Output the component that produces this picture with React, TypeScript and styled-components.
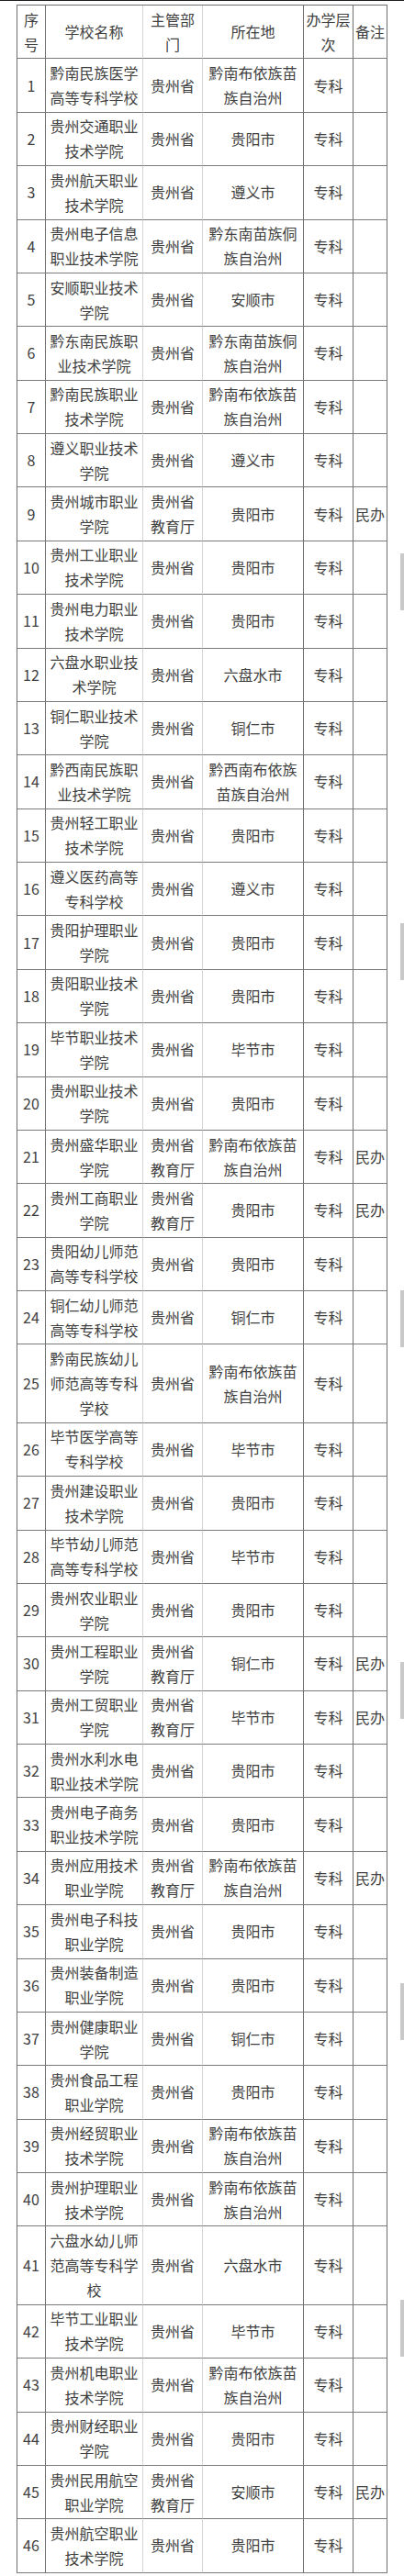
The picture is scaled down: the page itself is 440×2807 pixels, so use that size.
import React from "react";
import styled, { createGlobalStyle } from "styled-components";

const GlobalStyle = createGlobalStyle`
  * { box-sizing: border-box; }
  body {
    margin: 0;
    background: #fff;
    color: #404040;
    font-family: "Noto Sans CJK SC", "Noto Sans", sans-serif;
  }
`;

const Page = styled.div`
  position: relative;
  min-height: 2807px;
  border-top: 1px solid #1e1e1e;
  padding: 4px 0 0 18px;
`;

const Table = styled.table`
  width: 404px;
  table-layout: fixed;
  border-collapse: separate;
  border-spacing: 0;
  border-top: 1px solid #6f6f6f;
  border-left: 1px solid #6f6f6f;
`;

const cellStyle = `
  padding: 1.7px 1px;
  border-bottom: 1px solid #7a7a7a;
  text-align: center;
  vertical-align: middle;
  font-size: 16px;
  font-weight: 400;
  line-height: 27px;
  word-break: break-all;
`;

const HeadCell = styled.th<{ $light?: boolean }>`
  ${cellStyle}
  border-right: 1px solid ${(p) => (p.$light ? "#d4d4d4" : "#6f6f6f")};
`;

const Cell = styled.td<{ $light?: boolean }>`
  ${cellStyle}
  border-right: 1px solid ${(p) => (p.$light ? "#d4d4d4" : "#6f6f6f")};
`;

// scroll indicator left over from the stitched capture
const ScrollThumb = styled.div<{ $top: number }>`
  position: absolute;
  right: 0;
  top: ${(p) => p.$top}px;
  width: 4px;
  height: 62px;
  background: #c9c9c9;
`;

const COLUMNS = [
  { label: "序号", width: 31, light: false },
  { label: "学校名称", width: 106, light: true },
  { label: "主管部门", width: 65, light: true },
  { label: "所在地", width: 110, light: false },
  { label: "办学层次", width: 54, light: false },
  { label: "备注", width: 37, light: false },
];

const P = "贵州省";
const E = "贵州省教育厅";
const QN = "黔南布依族苗族自治州";
const QDN = "黔东南苗族侗族自治州";

// [name, department, location, note]
const SCHOOLS: [string, string, string, string?][] = [
  ["黔南民族医学高等专科学校", P, QN],
  ["贵州交通职业技术学院", P, "贵阳市"],
  ["贵州航天职业技术学院", P, "遵义市"],
  ["贵州电子信息职业技术学院", P, QDN],
  ["安顺职业技术学院", P, "安顺市"],
  ["黔东南民族职业技术学院", P, QDN],
  ["黔南民族职业技术学院", P, QN],
  ["遵义职业技术学院", P, "遵义市"],
  ["贵州城市职业学院", E, "贵阳市", "民办"],
  ["贵州工业职业技术学院", P, "贵阳市"],
  ["贵州电力职业技术学院", P, "贵阳市"],
  ["六盘水职业技术学院", P, "六盘水市"],
  ["铜仁职业技术学院", P, "铜仁市"],
  ["黔西南民族职业技术学院", P, "黔西南布依族苗族自治州"],
  ["贵州轻工职业技术学院", P, "贵阳市"],
  ["遵义医药高等专科学校", P, "遵义市"],
  ["贵阳护理职业学院", P, "贵阳市"],
  ["贵阳职业技术学院", P, "贵阳市"],
  ["毕节职业技术学院", P, "毕节市"],
  ["贵州职业技术学院", P, "贵阳市"],
  ["贵州盛华职业学院", E, QN, "民办"],
  ["贵州工商职业学院", E, "贵阳市", "民办"],
  ["贵阳幼儿师范高等专科学校", P, "贵阳市"],
  ["铜仁幼儿师范高等专科学校", P, "铜仁市"],
  ["黔南民族幼儿师范高等专科学校", P, QN],
  ["毕节医学高等专科学校", P, "毕节市"],
  ["贵州建设职业技术学院", P, "贵阳市"],
  ["毕节幼儿师范高等专科学校", P, "毕节市"],
  ["贵州农业职业学院", P, "贵阳市"],
  ["贵州工程职业学院", E, "铜仁市", "民办"],
  ["贵州工贸职业学院", E, "毕节市", "民办"],
  ["贵州水利水电职业技术学院", P, "贵阳市"],
  ["贵州电子商务职业技术学院", P, "贵阳市"],
  ["贵州应用技术职业学院", E, QN, "民办"],
  ["贵州电子科技职业学院", P, "贵阳市"],
  ["贵州装备制造职业学院", P, "贵阳市"],
  ["贵州健康职业学院", P, "铜仁市"],
  ["贵州食品工程职业学院", P, "贵阳市"],
  ["贵州经贸职业技术学院", P, QN],
  ["贵州护理职业技术学院", P, QN],
  ["六盘水幼儿师范高等专科学校", P, "六盘水市"],
  ["毕节工业职业技术学院", P, "毕节市"],
  ["贵州机电职业技术学院", P, QN],
  ["贵州财经职业学院", P, "贵阳市"],
  ["贵州民用航空职业学院", E, "安顺市", "民办"],
  ["贵州航空职业技术学院", P, "贵阳市"],
];

const THUMBS = [602, 1005, 1405, 1810, 2160, 2505];

export default function App() {
  return (
    <>
      <GlobalStyle />
      <Page>
        <Table>
          <colgroup>
            {COLUMNS.map(({ label, width }) => (
              <col key={label} style={{ width }} />
            ))}
          </colgroup>
          <thead>
            <tr>
              {COLUMNS.map(({ label, light }) => (
                <HeadCell key={label} $light={light}>
                  {label}
                </HeadCell>
              ))}
            </tr>
          </thead>
          <tbody>
            {SCHOOLS.map(([name, dept, place, note], i) => (
              <tr key={name}>
                <Cell>{i + 1}</Cell>
                <Cell $light>{name}</Cell>
                <Cell $light>{dept}</Cell>
                <Cell>{place}</Cell>
                <Cell>专科</Cell>
                <Cell>{note}</Cell>
              </tr>
            ))}
          </tbody>
        </Table>
        {THUMBS.map((top) => (
          <ScrollThumb key={top} $top={top} />
        ))}
      </Page>
    </>
  );
}
